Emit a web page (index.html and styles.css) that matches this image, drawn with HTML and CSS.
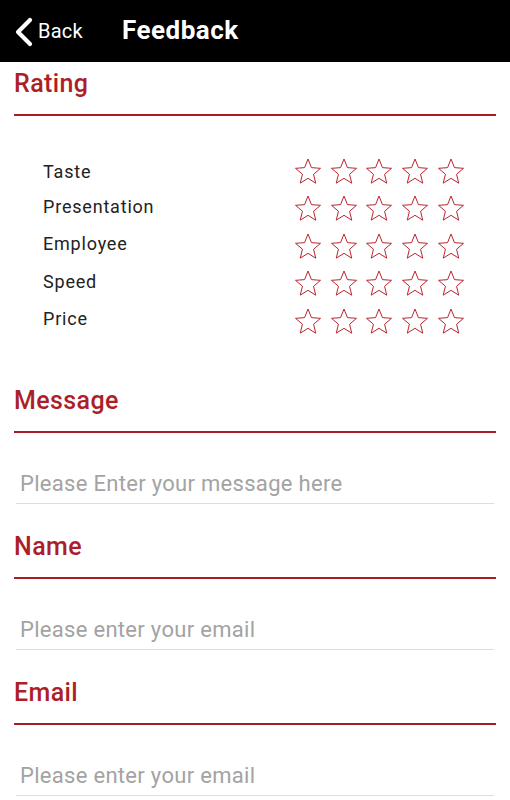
FILE: index.html
```html
<html>
<head>
  <title>Feedback</title>
  <meta charset="utf-8">
  <meta name="viewport" content="width=device-width, initial-scale=1">
  <link rel="stylesheet" href="styles.css">
</head>
<body>

<header class="topbar">
  <a class="back" href="#">
    <svg class="chevron" width="20" height="30" viewBox="0 0 20 30">
      <path d="M16 3 L4 15 L16 27" fill="none" stroke="#fff" stroke-width="4.2" stroke-linecap="round" stroke-linejoin="round"/>
    </svg>
    <span>Back</span>
  </a>
  <h1 class="title">Feedback</h1>
</header>

<section class="block rating">
  <h2 class="heading">Rating</h2>
  <div class="rows" id="rows"></div>
</section>

<section class="block">
  <h2 class="heading">Message</h2>
  <input class="field" type="text" placeholder="Please Enter your message here">
</section>

<section class="block">
  <h2 class="heading">Name</h2>
  <input class="field" type="text" placeholder="Please enter your email">
</section>

<section class="block">
  <h2 class="heading">Email</h2>
  <input class="field" type="text" placeholder="Please enter your email">
</section>

<script>
  var items = ['Taste', 'Presentation', 'Employee', 'Speed', 'Price'];
  var star = '<svg class="star" width="30" height="30" viewBox="0 0 24 24">' +
    '<path d="M12 1.6l2.75 6.9 7.25.55-5.55 4.75 1.75 7.15L12 17.05l-6.2 3.85 1.75-7.15L2 9.05l7.25-.55z" ' +
    'fill="none" stroke="#b8262f" stroke-width="0.8" stroke-linejoin="miter"/></svg>';

  var html = '';
  for (var i = 0; i < items.length; i++) {
    html += '<div class="row"><span class="label">' + items[i] + '</span><span class="stars">';
    for (var j = 0; j < 5; j++) {
      html += star;
    }
    html += '</span></div>';
  }
  document.getElementById('rows').innerHTML = html;
</script>

</body>
</html>
```

FILE: styles.css
```css
* {
  box-sizing: border-box;
}

body {
  margin: 0;
  font-family: Roboto, "Liberation Sans", Arial, sans-serif;
  background: #fff;
}

/* top bar */
.topbar {
  height: 62px;
  background: #000;
  display: flex;
  align-items: center;
  padding-left: 14px;
}

.back {
  display: flex;
  align-items: center;
  color: #fff;
  text-decoration: none;
  font-size: 20px;
  width: 108px;
}

.chevron {
  margin-right: 4px;
  margin-top: 1px;
}

.back span {
  margin-top: -1px;
  letter-spacing: 0.2px;
}

.title {
  margin: 0;
  color: #fff;
  font-size: 26px;
  font-weight: 700;
  letter-spacing: 0.5px;
  margin-top: -2px;
}

/* sections */
.block {
  padding: 0 14px;
  margin-top: 29px;
}

.rating {
  margin-top: 8px;
  padding-bottom: 46px;
}

.rating + .block {
  margin-top: 0;
}

.heading {
  margin: 0;
  font-size: 25px;
  line-height: 28px;
  font-weight: 500;
  letter-spacing: 0.4px;
  color: #ad1f28;
  padding-bottom: 16px;
  border-bottom: 2px solid #a81c24;
}

/* rating rows */
.rows {
  padding-top: 37px;
  padding-left: 29px;
}

.row {
  display: grid;
  grid-template-columns: 250px auto;
  align-items: center;
  height: 37.5px;
}

.label {
  font-size: 18px;
  line-height: 20px;
  letter-spacing: 0.8px;
  color: #222;
  padding-bottom: 5px;
}

.row:first-child .label {
  padding-bottom: 0;
}

.stars {
  display: flex;
  gap: 5.7px;
}

.star {
  display: block;
}

/* text fields */
.field {
  display: block;
  width: 478px;
  margin: 38px 0 0 2px;
  border: none;
  border-bottom: 1px solid #dedede;
  padding: 0 0 7px 4px;
  font-family: Roboto, "Liberation Sans", Arial, sans-serif;
  font-size: 22px;
  line-height: 25px;
  letter-spacing: 0.3px;
  height: 33px;
  outline: none;
  color: #333;
}

.field::placeholder {
  color: #a3a3a3;
}
```
